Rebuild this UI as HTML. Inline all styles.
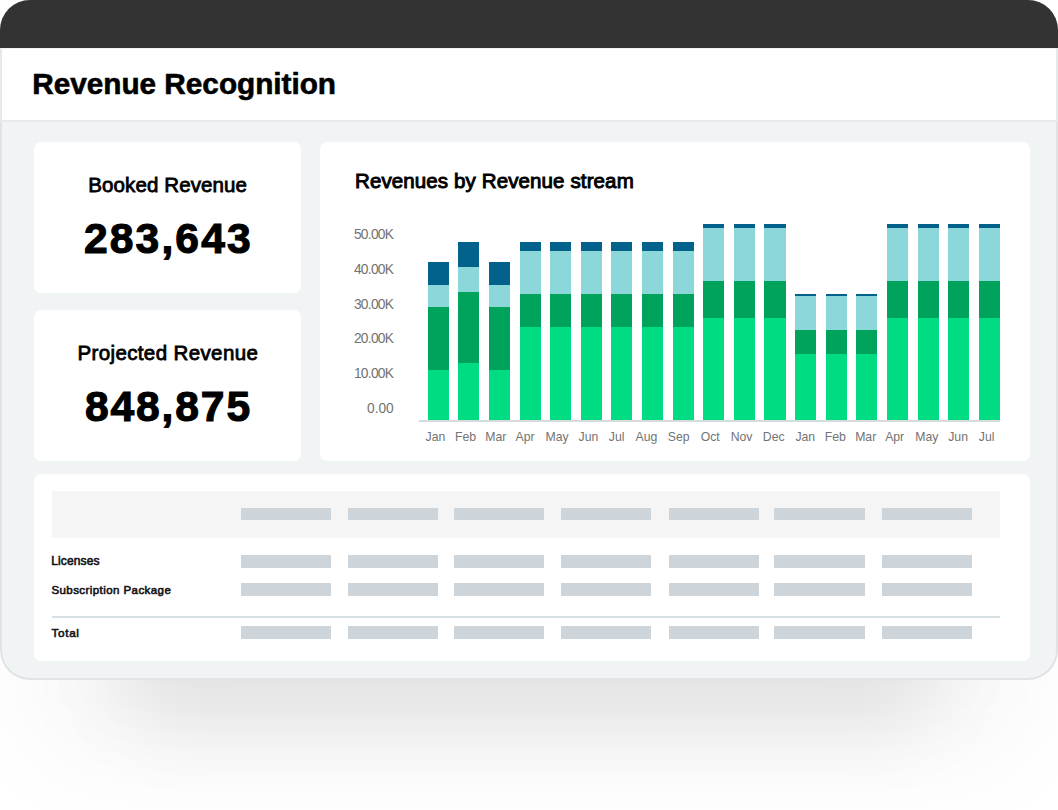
<!DOCTYPE html>
<html><head><meta charset="utf-8">
<style>
*{margin:0;padding:0;box-sizing:border-box}
html,body{width:1058px;height:810px;background:#fff;overflow:hidden;font-family:"Liberation Sans",sans-serif;color:#000}
.shadow{position:absolute;left:120px;top:590px;width:818px;height:140px;background:rgba(0,0,0,0.075);filter:blur(36px);border-radius:60px}
.shadow2{position:absolute;left:30px;top:560px;width:998px;height:200px;background:rgba(0,0,0,0.035);filter:blur(50px);border-radius:80px}
.frame{position:absolute;left:0;top:0;width:1058px;height:680px;border-radius:30px;overflow:hidden;background:#f0f4f5}
.fborder{position:absolute;left:0;top:0;width:1058px;height:680px;border-radius:30px;border:2px solid #e1e2e3}
.topbar{position:absolute;left:0;top:0;width:1058px;height:48px;background:#333333}
.header{position:absolute;left:0;top:48px;width:1058px;height:74px;background:#fff;border-top:1px solid #eef2f4;border-bottom:2px solid #e7ebed;border-left:2px solid #e4e9eb;border-right:2px solid #e4e9eb}
.card{position:absolute;background:#fff;border-radius:7px}
.t{position:absolute;white-space:nowrap;font-weight:bold;line-height:1}
.ml{position:absolute;top:431px;width:40px;text-align:center;font-size:12.25px;color:#737373;line-height:1;white-space:nowrap}
.yl{position:absolute;font-size:13.75px;color:#737373;line-height:1;white-space:nowrap}
.m{font-weight:normal;-webkit-text-stroke:0.8px #000}
.n{-webkit-text-stroke:1.1px #000}
.s{font-weight:normal;color:#141414;-webkit-text-stroke:0.6px #141414}
.ph{position:absolute;height:12.5px;width:90.3px;background:#cdd5da}
.bar{position:absolute;width:21.1px}
</style></head><body>
<div class="shadow2"></div>
<div class="shadow"></div>
<div class="frame">
  <div class="fborder"></div>
  <div class="header"></div>
  <div class="topbar"></div>
</div>
<div class="t" style="left:32.26px;top:69px;font-size:29.75px;letter-spacing:-0.02px;-webkit-text-stroke:0.6px #000">Revenue Recognition</div>

<div class="card" style="left:34px;top:142px;width:267px;height:151px"></div>
<div class="card" style="left:34px;top:310px;width:267px;height:151px"></div>
<div class="card" style="left:320px;top:142px;width:710px;height:318.5px"></div>
<div class="card" style="left:34px;top:473.5px;width:996px;height:187px"></div>

<div class="t m" style="left:88.31px;top:175px;font-size:20.5px;letter-spacing:0.11px">Booked Revenue</div>
<div class="t n" style="left:84.02px;top:216.5px;font-size:42.625px;letter-spacing:2.1px">283,643</div>
<div class="t m" style="left:77.41px;top:343px;font-size:20.5px;letter-spacing:0.38px">Projected Revenue</div>
<div class="t n" style="left:84.91px;top:384.5px;font-size:42.625px;letter-spacing:1.86px">848,875</div>

<div class="t m" style="left:354.96px;top:171px;font-size:20.5px;letter-spacing:0.12px;-webkit-text-stroke:0.95px #000">Revenues by Revenue stream</div>

<div class="bar" style="left:427.70px;top:261.90px;height:158.10px;background:#02628b"></div>
<div class="bar" style="left:427.70px;top:284.70px;height:135.30px;background:#8bd7d9"></div>
<div class="bar" style="left:427.70px;top:307.00px;height:113.00px;background:#00a35b"></div>
<div class="bar" style="left:427.70px;top:369.80px;height:50.20px;background:#00dc82"></div>
<div class="ml" style="left:415.40px">Jan</div>
<div class="bar" style="left:458.32px;top:241.80px;height:178.20px;background:#02628b"></div>
<div class="bar" style="left:458.32px;top:267.10px;height:152.90px;background:#8bd7d9"></div>
<div class="bar" style="left:458.32px;top:292.40px;height:127.60px;background:#00a35b"></div>
<div class="bar" style="left:458.32px;top:363.00px;height:57.00px;background:#00dc82"></div>
<div class="ml" style="left:445.50px">Feb</div>
<div class="bar" style="left:488.93px;top:261.90px;height:158.10px;background:#02628b"></div>
<div class="bar" style="left:488.93px;top:284.70px;height:135.30px;background:#8bd7d9"></div>
<div class="bar" style="left:488.93px;top:307.00px;height:113.00px;background:#00a35b"></div>
<div class="bar" style="left:488.93px;top:369.80px;height:50.20px;background:#00dc82"></div>
<div class="ml" style="left:475.90px">Mar</div>
<div class="bar" style="left:519.55px;top:241.90px;height:178.10px;background:#02628b"></div>
<div class="bar" style="left:519.55px;top:250.70px;height:169.30px;background:#8bd7d9"></div>
<div class="bar" style="left:519.55px;top:293.50px;height:126.50px;background:#00a35b"></div>
<div class="bar" style="left:519.55px;top:326.90px;height:93.10px;background:#00dc82"></div>
<div class="ml" style="left:505.10px">Apr</div>
<div class="bar" style="left:550.17px;top:241.90px;height:178.10px;background:#02628b"></div>
<div class="bar" style="left:550.17px;top:250.70px;height:169.30px;background:#8bd7d9"></div>
<div class="bar" style="left:550.17px;top:293.50px;height:126.50px;background:#00a35b"></div>
<div class="bar" style="left:550.17px;top:326.90px;height:93.10px;background:#00dc82"></div>
<div class="ml" style="left:537.00px">May</div>
<div class="bar" style="left:580.78px;top:241.90px;height:178.10px;background:#02628b"></div>
<div class="bar" style="left:580.78px;top:250.70px;height:169.30px;background:#8bd7d9"></div>
<div class="bar" style="left:580.78px;top:293.50px;height:126.50px;background:#00a35b"></div>
<div class="bar" style="left:580.78px;top:326.90px;height:93.10px;background:#00dc82"></div>
<div class="ml" style="left:568.40px">Jun</div>
<div class="bar" style="left:611.40px;top:241.90px;height:178.10px;background:#02628b"></div>
<div class="bar" style="left:611.40px;top:250.70px;height:169.30px;background:#8bd7d9"></div>
<div class="bar" style="left:611.40px;top:293.50px;height:126.50px;background:#00a35b"></div>
<div class="bar" style="left:611.40px;top:326.90px;height:93.10px;background:#00dc82"></div>
<div class="ml" style="left:596.60px">Jul</div>
<div class="bar" style="left:642.02px;top:241.90px;height:178.10px;background:#02628b"></div>
<div class="bar" style="left:642.02px;top:250.70px;height:169.30px;background:#8bd7d9"></div>
<div class="bar" style="left:642.02px;top:293.50px;height:126.50px;background:#00a35b"></div>
<div class="bar" style="left:642.02px;top:326.90px;height:93.10px;background:#00dc82"></div>
<div class="ml" style="left:626.50px">Aug</div>
<div class="bar" style="left:672.64px;top:241.90px;height:178.10px;background:#02628b"></div>
<div class="bar" style="left:672.64px;top:250.70px;height:169.30px;background:#8bd7d9"></div>
<div class="bar" style="left:672.64px;top:293.50px;height:126.50px;background:#00a35b"></div>
<div class="bar" style="left:672.64px;top:326.90px;height:93.10px;background:#00dc82"></div>
<div class="ml" style="left:658.70px">Sep</div>
<div class="bar" style="left:703.25px;top:223.50px;height:196.50px;background:#02628b"></div>
<div class="bar" style="left:703.25px;top:228.20px;height:191.80px;background:#8bd7d9"></div>
<div class="bar" style="left:703.25px;top:280.70px;height:139.30px;background:#00a35b"></div>
<div class="bar" style="left:703.25px;top:317.90px;height:102.10px;background:#00dc82"></div>
<div class="ml" style="left:690.20px">Oct</div>
<div class="bar" style="left:733.87px;top:223.50px;height:196.50px;background:#02628b"></div>
<div class="bar" style="left:733.87px;top:228.20px;height:191.80px;background:#8bd7d9"></div>
<div class="bar" style="left:733.87px;top:280.70px;height:139.30px;background:#00a35b"></div>
<div class="bar" style="left:733.87px;top:317.90px;height:102.10px;background:#00dc82"></div>
<div class="ml" style="left:721.60px">Nov</div>
<div class="bar" style="left:764.49px;top:223.50px;height:196.50px;background:#02628b"></div>
<div class="bar" style="left:764.49px;top:228.20px;height:191.80px;background:#8bd7d9"></div>
<div class="bar" style="left:764.49px;top:280.70px;height:139.30px;background:#00a35b"></div>
<div class="bar" style="left:764.49px;top:317.90px;height:102.10px;background:#00dc82"></div>
<div class="ml" style="left:753.70px">Dec</div>
<div class="bar" style="left:795.10px;top:293.50px;height:126.50px;background:#02628b"></div>
<div class="bar" style="left:795.10px;top:296.30px;height:123.70px;background:#8bd7d9"></div>
<div class="bar" style="left:795.10px;top:330.00px;height:90.00px;background:#00a35b"></div>
<div class="bar" style="left:795.10px;top:354.10px;height:65.90px;background:#00dc82"></div>
<div class="ml" style="left:785.30px">Jan</div>
<div class="bar" style="left:825.72px;top:293.50px;height:126.50px;background:#02628b"></div>
<div class="bar" style="left:825.72px;top:296.30px;height:123.70px;background:#8bd7d9"></div>
<div class="bar" style="left:825.72px;top:330.00px;height:90.00px;background:#00a35b"></div>
<div class="bar" style="left:825.72px;top:354.10px;height:65.90px;background:#00dc82"></div>
<div class="ml" style="left:815.30px">Feb</div>
<div class="bar" style="left:856.34px;top:293.50px;height:126.50px;background:#02628b"></div>
<div class="bar" style="left:856.34px;top:296.30px;height:123.70px;background:#8bd7d9"></div>
<div class="bar" style="left:856.34px;top:330.00px;height:90.00px;background:#00a35b"></div>
<div class="bar" style="left:856.34px;top:354.10px;height:65.90px;background:#00dc82"></div>
<div class="ml" style="left:845.70px">Mar</div>
<div class="bar" style="left:886.95px;top:223.50px;height:196.50px;background:#02628b"></div>
<div class="bar" style="left:886.95px;top:228.20px;height:191.80px;background:#8bd7d9"></div>
<div class="bar" style="left:886.95px;top:280.70px;height:139.30px;background:#00a35b"></div>
<div class="bar" style="left:886.95px;top:317.90px;height:102.10px;background:#00dc82"></div>
<div class="ml" style="left:874.70px">Apr</div>
<div class="bar" style="left:917.57px;top:223.50px;height:196.50px;background:#02628b"></div>
<div class="bar" style="left:917.57px;top:228.20px;height:191.80px;background:#8bd7d9"></div>
<div class="bar" style="left:917.57px;top:280.70px;height:139.30px;background:#00a35b"></div>
<div class="bar" style="left:917.57px;top:317.90px;height:102.10px;background:#00dc82"></div>
<div class="ml" style="left:906.90px">May</div>
<div class="bar" style="left:948.19px;top:223.50px;height:196.50px;background:#02628b"></div>
<div class="bar" style="left:948.19px;top:228.20px;height:191.80px;background:#8bd7d9"></div>
<div class="bar" style="left:948.19px;top:280.70px;height:139.30px;background:#00a35b"></div>
<div class="bar" style="left:948.19px;top:317.90px;height:102.10px;background:#00dc82"></div>
<div class="ml" style="left:938.10px">Jun</div>
<div class="bar" style="left:978.81px;top:223.50px;height:196.50px;background:#02628b"></div>
<div class="bar" style="left:978.81px;top:228.20px;height:191.80px;background:#8bd7d9"></div>
<div class="bar" style="left:978.81px;top:280.70px;height:139.30px;background:#00a35b"></div>
<div class="bar" style="left:978.81px;top:317.90px;height:102.10px;background:#00dc82"></div>
<div class="ml" style="left:966.60px">Jul</div>
<div class="yl" style="top:228.20px;left:353.93px;letter-spacing:-0.72px">50.00K</div>
<div class="yl" style="top:262.94px;left:353.93px;letter-spacing:-0.72px">40.00K</div>
<div class="yl" style="top:297.68px;left:353.93px;letter-spacing:-0.72px">30.00K</div>
<div class="yl" style="top:332.42px;left:353.93px;letter-spacing:-0.72px">20.00K</div>
<div class="yl" style="top:367.16px;left:353.93px;letter-spacing:-0.72px">10.00K</div>
<div class="yl" style="top:401.90px;left:367.07px;letter-spacing:-0.02px">0.00</div>
<div style="position:absolute;left:419.1px;top:420px;width:581px;height:1.9px;background:#d5dce0"></div>

<div style="position:absolute;left:51.5px;top:490.5px;width:948px;height:47px;background:#f5f5f5"></div>
<div class="t s" style="left:51.23px;top:554.5px;font-size:12px;letter-spacing:0.14px">Licenses</div>
<div class="t s" style="left:51.45px;top:584.5px;font-size:11.5px;letter-spacing:0.43px">Subscription Package</div>
<div class="t s" style="left:51.52px;top:627.4px;font-size:11.75px;letter-spacing:0.65px">Total</div>
<div style="position:absolute;left:51.5px;top:615.5px;width:948px;height:2px;background:#d6dfe3"></div>
<div class="ph" style="left:241px;top:507.9px"></div>
<div class="ph" style="left:348.2px;top:507.9px"></div>
<div class="ph" style="left:453.8px;top:507.9px"></div>
<div class="ph" style="left:561.2px;top:507.9px"></div>
<div class="ph" style="left:668.8px;top:507.9px"></div>
<div class="ph" style="left:774.3px;top:507.9px"></div>
<div class="ph" style="left:881.5px;top:507.9px"></div>
<div class="ph" style="left:241px;top:555.3px"></div>
<div class="ph" style="left:348.2px;top:555.3px"></div>
<div class="ph" style="left:453.8px;top:555.3px"></div>
<div class="ph" style="left:561.2px;top:555.3px"></div>
<div class="ph" style="left:668.8px;top:555.3px"></div>
<div class="ph" style="left:774.3px;top:555.3px"></div>
<div class="ph" style="left:881.5px;top:555.3px"></div>
<div class="ph" style="left:241px;top:583.4px"></div>
<div class="ph" style="left:348.2px;top:583.4px"></div>
<div class="ph" style="left:453.8px;top:583.4px"></div>
<div class="ph" style="left:561.2px;top:583.4px"></div>
<div class="ph" style="left:668.8px;top:583.4px"></div>
<div class="ph" style="left:774.3px;top:583.4px"></div>
<div class="ph" style="left:881.5px;top:583.4px"></div>
<div class="ph" style="left:241px;top:626.4px"></div>
<div class="ph" style="left:348.2px;top:626.4px"></div>
<div class="ph" style="left:453.8px;top:626.4px"></div>
<div class="ph" style="left:561.2px;top:626.4px"></div>
<div class="ph" style="left:668.8px;top:626.4px"></div>
<div class="ph" style="left:774.3px;top:626.4px"></div>
<div class="ph" style="left:881.5px;top:626.4px"></div>
</body></html>
